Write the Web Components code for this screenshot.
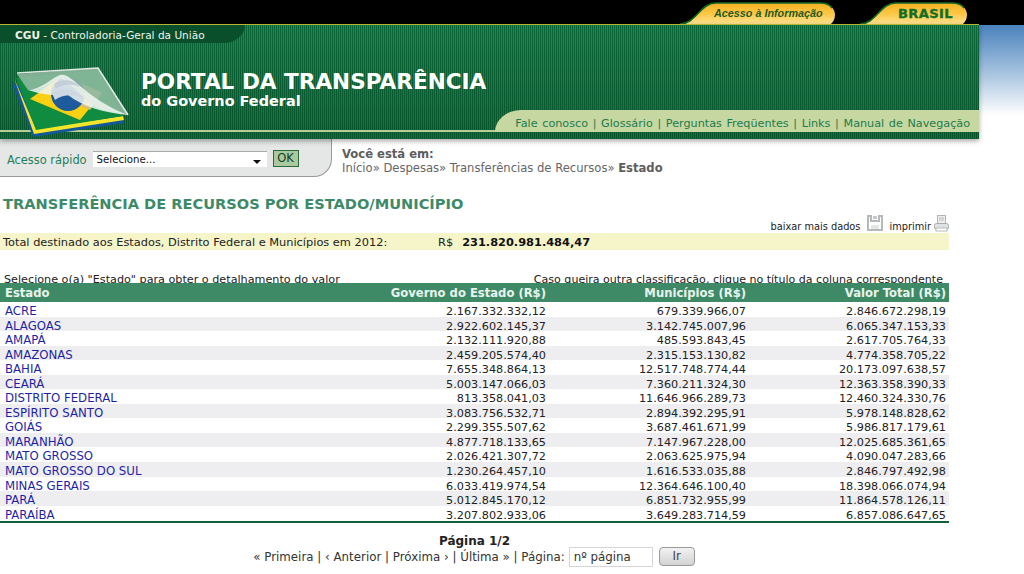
<!DOCTYPE html>
<html lang="pt-BR">
<head>
<meta charset="utf-8">
<title>Portal da Transparência</title>
<style>
	html, body { margin: 0; background: #fff; }
	body { font: 11px "DejaVu Sans", Verdana, sans-serif; color: #222; overflow: hidden; height: 574px; }
</style>
</head>
<body>
<portal-header></portal-header>
<quick-bar></quick-bar>
<page-content>
	<span slot="title">TRANSFERÊNCIA DE RECURSOS POR ESTADO/MUNICÍPIO</span>
	<state-table>
		<state-row name="ACRE" gov="2.167.332.332,12" mun="679.339.966,07" total="2.846.672.298,19"></state-row>
		<state-row name="ALAGOAS" gov="2.922.602.145,37" mun="3.142.745.007,96" total="6.065.347.153,33"></state-row>
		<state-row name="AMAPÁ" gov="2.132.111.920,88" mun="485.593.843,45" total="2.617.705.764,33"></state-row>
		<state-row name="AMAZONAS" gov="2.459.205.574,40" mun="2.315.153.130,82" total="4.774.358.705,22"></state-row>
		<state-row name="BAHIA" gov="7.655.348.864,13" mun="12.517.748.774,44" total="20.173.097.638,57"></state-row>
		<state-row name="CEARÁ" gov="5.003.147.066,03" mun="7.360.211.324,30" total="12.363.358.390,33"></state-row>
		<state-row name="DISTRITO FEDERAL" gov="813.358.041,03" mun="11.646.966.289,73" total="12.460.324.330,76"></state-row>
		<state-row name="ESPÍRITO SANTO" gov="3.083.756.532,71" mun="2.894.392.295,91" total="5.978.148.828,62"></state-row>
		<state-row name="GOIÁS" gov="2.299.355.507,62" mun="3.687.461.671,99" total="5.986.817.179,61"></state-row>
		<state-row name="MARANHÃO" gov="4.877.718.133,65" mun="7.147.967.228,00" total="12.025.685.361,65"></state-row>
		<state-row name="MATO GROSSO" gov="2.026.421.307,72" mun="2.063.625.975,94" total="4.090.047.283,66"></state-row>
		<state-row name="MATO GROSSO DO SUL" gov="1.230.264.457,10" mun="1.616.533.035,88" total="2.846.797.492,98"></state-row>
		<state-row name="MINAS GERAIS" gov="6.033.419.974,54" mun="12.364.646.100,40" total="18.398.066.074,94"></state-row>
		<state-row name="PARÁ" gov="5.012.845.170,12" mun="6.851.732.955,99" total="11.864.578.126,11"></state-row>
		<state-row name="PARAÍBA" gov="3.207.802.933,06" mun="3.649.283.714,59" total="6.857.086.647,65"></state-row>
	</state-table>
	<page-nav></page-nav>
</page-content>

<script>
(function() {
	/**
	 * Small base class, every component only gives its markup
	*/
	class ShadowBlock extends HTMLElement {
		connectedCallback() {
			if (!this.shadowRoot) {
				this.attachShadow({mode: 'open'}).innerHTML = this.markup();
			}
		}
	}

	class TopTab extends ShadowBlock {
		markup() {
			const w = Number(this.getAttribute('width'));
			return `<style>
				:host { display: flex; position: relative; width: ${w}px; height: 25px; padding-left: 34px; box-sizing: border-box; white-space: nowrap; }
				svg { position: absolute; left: 0; top: 0; }
				.label { position: relative; padding-top: 7px; }
			</style>
			<svg width="${w}" height="25" viewBox="0 0 ${w} 25">
				<defs><linearGradient id="g" x1="0" y1="0" x2="0" y2="1">
					<stop offset="0" stop-color="#f6b021"/><stop offset=".5" stop-color="#fdc744"/><stop offset="1" stop-color="#ffe391"/>
				</linearGradient></defs>
				<path d="M0 24 C16 24 20 3 36 3 H${w - 16} C${w - 6} 3 ${w - 1} 9 ${w - 1} 15 C${w - 1} 19 ${w - 3} 22 ${w - 5} 24 Z" fill="url(#g)"/>
				<path d="M0 24 C16 24 20 3 36 3 H${w - 16} C${w - 10} 3 ${w - 6} 5 ${w - 4} 8" fill="none" stroke="#136a25" stroke-width="1.6"/>
			</svg>
			<div class="label"><slot></slot></div>`;
		}
	}

	class PortalHeader extends ShadowBlock {
		markup() {
			return `<style>
				:host { display: block; position: relative; width: 1024px; height: 139px; }
				.top { height: 24px; background: #000; display: flex; padding-left: 680px; }
				.top top-tab:last-child { margin-left: 24px; }
				.acesso { font: italic bold 10.8px "Liberation Sans", Arial, sans-serif; color: #1c5a22; }
				.brasil { display: block; font: bold 13px "DejaVu Sans", sans-serif; color: #0f6f2a; margin: -1px 0 0 4px; letter-spacing: .4px; -webkit-text-stroke: .4px #0f6f2a; }
				.main { display: flex; height: 115px; background: linear-gradient(#000 1px, transparent 1px); }
				.banner { width: 979px; position: relative; display: flex; flex-direction: column; box-sizing: border-box;
					border-top: 1px solid #b4b735;
					background:
						linear-gradient(180deg, rgba(0,60,30,.1), rgba(0,40,15,.34)),
						repeating-linear-gradient(90deg, #0b6b3a 0 1px, #239060 1px 2px);
					box-shadow: 0 2px 5px rgba(0,0,0,.35); }
				.sky { flex: 1; height: 90px; margin-top: 1px; background: linear-gradient(180deg, #4a82bd, #a9c5e0 55%, #fff); }
				.cgu { width: 245px; height: 20px; box-sizing: border-box; padding: 4px 0 0 15px; background: #0a4f2b;
					border-bottom-right-radius: 24px 20px; color: #f0f4ee; font-size: 10.55px; white-space: nowrap; }
				.brand { margin: 25px 0 0 141px; color: #fff; font-weight: bold; }
				.brand .big { font-size: 21.6px; line-height: 27px; }
				.brand .small { font-size: 14.45px; line-height: 17px; margin-top: -2px; }
				.foot { margin-top: auto; margin-bottom: 7px; border-bottom: 2px solid #b6cd97; display: flex; justify-content: flex-end; height: 20px; }
				.links { width: 484px; height: 22px; box-sizing: border-box; background: #c6d7a2;
					border-top-left-radius: 26px 22px; padding: 7px 9px 0 0; text-align: right; color: #1c7c4c; font-size: 11.2px; word-spacing: 1.1px; white-space: nowrap; }
				svg { position: absolute; left: 0; top: 30px; }
			</style>
			<div class="top">
				<top-tab width="156"><span class="acesso">Acesso à Informação</span></top-tab>
				<top-tab width="108"><span class="brasil">BRASIL</span></top-tab>
			</div>
			<div class="main">
				<div class="banner">
					<div class="cgu"><b>CGU</b> - Controladoria-Geral da União</div>
					<div class="brand">
						<div class="big">PORTAL DA TRANSPARÊNCIA</div>
						<div class="small">do Governo Federal</div>
					</div>
					<div class="foot"><div class="links">Fale conosco | Glossário | Perguntas Freqüentes | Links | Manual de Navegação</div></div>
					<svg width="140" height="90" viewBox="0 55 140 90">
						<path d="M12 83 L33 137 L124 123 L122 117 Z" fill="#14589a"/>
						<path d="M14 78 L34 134 L124 120 L123 116 L36 129 Z" fill="#f3e52a"/>
						<path d="M16 78 L36 130 L123 116 L98 70 Z" fill="#0f8c40"/>
						<path d="M30 99 L63 75 L102 93 L80 120 Z" fill="#f9d112"/>
						<path d="M50 92 L63 75 L102 93 L90 110 Z" fill="#d4bf7c"/>
						<circle cx="68" cy="94" r="17" fill="#1d5b9d"/>
						<path d="M17 74 L98 68 L128 115 L100 109 C84 100 72 84 60 78 C50 84 38 90 28 90 Z" fill="#8fb9a0" opacity=".88"/>
						<path d="M28 90 C40 90 52 78 60 75 C72 72 84 98 128 115 C104 113 82 106 68 95 C60 96 42 95 28 90 Z" fill="#f2f6f2" opacity=".85"/>
						<path d="M52 93 C60 87 74 87 84 98 C74 94 62 94 55 100 Z" fill="#cfd8e2"/>
						<path d="M54 84 C62 78 74 79 80 87 C72 83 62 84 56 89 Z" fill="#c4ced8"/>
						<path d="M17 73 L98 68 L128 115" fill="none" stroke="#dfe8e2" stroke-width="1.6"/>
					</svg>
				</div>
				<div class="sky"></div>
			</div>`;
		}
	}

	class QuickBar extends ShadowBlock {
		markup() {
			return `<style>
				:host { display: flex; height: 38px; width: 979px; }
				.fast { width: 332px; box-sizing: border-box; height: 38px; background: #e5e6e6; border-right: 1px solid #999; border-bottom: 1px solid #999;
					border-bottom-right-radius: 18px; display: flex; align-items: center; padding: 2px 0 0 7px; }
				.fast span { color: #1f7f57; margin-right: 6px; font-size: 11.4px; padding-top: 2px; }
				.sel { width: 174px; height: 16px; box-sizing: border-box; background: #fff; border-top: 1px solid #aaa; color: #111; font-size: 10.2px;
					padding: 0 6px 0 4px; line-height: 15px; display: flex; justify-content: space-between; align-items: center; }
				.sel i { border: 4px solid transparent; border-top: 4px solid #111; border-bottom: 0; margin-top: 5px; }
				.ok { width: 26px; height: 17px; box-sizing: border-box; margin-left: 6px; background: #a9c9a0; border: 1px solid #2a6a35; color: #16401f;
					font-size: 11.5px; text-align: center; line-height: 15px; }
				.crumb { padding: 8px 0 0 10px; color: #666; line-height: 14px; white-space: nowrap; font-size: 11.58px; }
				.crumb b { color: #5d5d5d; }
			</style>
			<div class="fast"><span>Acesso rápido</span><div class="sel">Selecione...<i></i></div><div class="ok">OK</div></div>
			<div class="crumb"><b>Você está em:</b><br>Início» Despesas» Transferências de Recursos» <b>Estado</b></div>`;
		}
	}

	class PageContent extends ShadowBlock {
		markup() {
			return `<style>
				:host { display: block; width: 949px; }
				h1 { margin: 19px 0 0 3px; font-size: 14.6px; line-height: 16px; color: #3d8a68; font-weight: bold; white-space: nowrap; }
				.tools { height: 21px; display: flex; justify-content: flex-end; align-items: flex-end; font-size: 9.8px; color: #222; }
				.tools svg { display: block; }
				.tools span { line-height: 13px; }
				.total { height: 17px; background: #f5f5c9; display: flex; align-items: center; padding-left: 3px; color: #222; white-space: nowrap; font-size: 11.36px; }
				.total .lbl { width: 435px; }
				.total b { margin-left: 9px; color: #111; }
				.hint { display: flex; justify-content: space-between; height: 10px; margin-top: 23px; padding: 0 6px 0 4px; font-size: 11.2px; line-height: 14px; color: #222; white-space: nowrap; }
				.hint span + span { font-size: 11.05px; }
			</style>
			<h1><slot name="title"></slot></h1>
			<div class="tools">
				<span>baixar mais dados</span>
				<svg style="margin:0 6px 2px 7px" width="16" height="16" viewBox="0 0 16 16"><path d="M1 1H4V6H12V1H15V15H1Z" fill="none" stroke="#b5b9b9" stroke-width="2"/><rect x="4" y="10" width="8" height="4" fill="#e5e7e7"/><rect x="6" y="1" width="4" height="3" fill="#c5c8c8"/></svg>
				<span>imprimir</span>
				<svg style="margin:0 0 1px 3px" width="15" height="17" viewBox="0 0 15 17"><rect x="3.5" y=".5" width="8" height="8" fill="#eee" stroke="#b0b4b4"/><path d="M5 3H10M5 5H10" stroke="#b8bcbc"/><rect x=".5" y="8.5" width="14" height="6" rx="2" fill="#dfe2e2" stroke="#a8acac"/><rect x="2" y="13" width="11" height="3" fill="#fff" stroke="#b8bcbc"/></svg>
			</div>
			<div class="total"><span class="lbl">Total destinado aos Estados, Distrito Federal e Municípios em 2012:</span><span>R$</span><b>231.820.981.484,47</b></div>
			<div class="hint"><span>Selecione o(a) "Estado" para obter o detalhamento do valor</span><span>Caso queira outra classificação, clique no título da coluna correspondente</span></div>
			<slot></slot>`;
		}
	}

	class StateTable extends ShadowBlock {
		markup() {
			return `<style>
				:host { display: block; border-bottom: 2px solid #15603a; padding-bottom: 1px; }
				.head { position: relative; height: 19px; background: #3f8a66; color: #e8f3ec; font-weight: bold; font-size: 11.6px; display: grid; grid-template-columns: 346px 200px 200px 200px; line-height: 21px; white-space: nowrap; }
				.head div:first-child { padding-left: 5px; }
				.head div + div { text-align: right; }
				::slotted(state-row:nth-child(even)) { background: #eeeef0; }
			</style>
			<div class="head"><div>Estado</div><div>Governo do Estado (R$)</div><div>Municípios (R$)</div><div>Valor Total (R$)</div></div>
			<slot></slot>`;
		}
	}

	class StateRow extends ShadowBlock {
		markup() {
			return `<style>
				:host { display: grid; grid-template-columns: 346px 200px 200px 200px; height: 14.55px; line-height: 19px; color: #222; white-space: nowrap; font-size: 11.22px; }
				a { color: #1f1fa5; text-decoration: none; padding-left: 5px; font-size: 11.75px; }
				div { text-align: right; }
			</style>
			<a href="#">${this.getAttribute('name')}</a>
			<div>${this.getAttribute('gov')}</div>
			<div>${this.getAttribute('mun')}</div>
			<div>${this.getAttribute('total')}</div>`;
		}
	}

	class PageNav extends ShadowBlock {
		markup() {
			return `<style>
				:host { display: block; text-align: center; color: #333; padding-top: 11px; white-space: nowrap; font-size: 11.84px; }
				.line { display: flex; justify-content: center; align-items: center; height: 21px; padding-right: 1px; margin-top: -2px; }
				b { color: #222; display: block; line-height: 14px; font-size: 12px; }
				.in { width: 84px; height: 20px; box-sizing: border-box; border: 1px solid #d5d5d5; text-align: left; padding-left: 4px; line-height: 18px; margin-left: 4px; }
				.btn { width: 36px; height: 19px; box-sizing: border-box; margin-left: 6px; border: 1px solid #999; border-radius: 4px; background: linear-gradient(#f2f2f2, #d2d2d2); line-height: 17px; text-align: center; color: #444; }
			</style>
			<b>Página 1/2</b>
			<div class="line"><span>« Primeira | ‹ Anterior | Próxima › | Última » | Página:</span><div class="in">nº página</div><div class="btn">Ir</div></div>`;
		}
	}

	customElements.define('top-tab', TopTab);
	customElements.define('portal-header', PortalHeader);
	customElements.define('quick-bar', QuickBar);
	customElements.define('page-content', PageContent);
	customElements.define('state-table', StateTable);
	customElements.define('state-row', StateRow);
	customElements.define('page-nav', PageNav);
})();
</script>
</body>
</html>
